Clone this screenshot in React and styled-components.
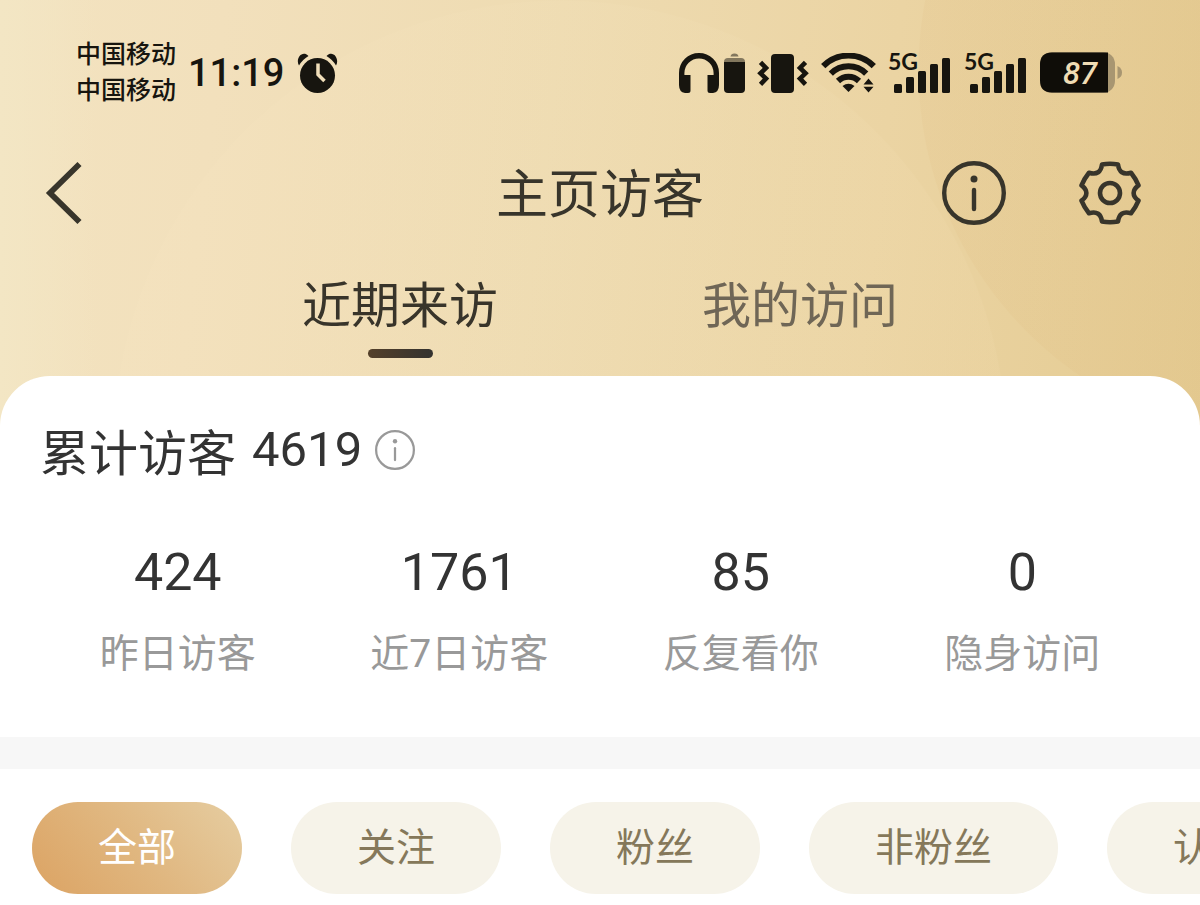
import React, { useState } from 'react';
import styled, { createGlobalStyle } from 'styled-components';

const GlobalStyle = createGlobalStyle`
  * {
    box-sizing: border-box;
  }
  body {
    margin: 0;
    background-color: #ffffff;
    color: #333333;
    font-family: Roboto, 'Noto Sans CJK SC', sans-serif;
  }
  button {
    background-color: transparent;
    border: none;
    color: inherit;
    cursor: pointer;
    font-family: inherit;
    margin: 0;
    padding: 0;
  }
  svg {
    display: block;
    flex: none;
  }
`;

const Page = styled.div`
  background: radial-gradient(circle 371px at 1289px 70px, rgba(218, 176, 112, 0.1) 99.7%, transparent 100%),
    linear-gradient(90deg, #f3e6c4 0%, rgba(243, 230, 196, 0) 8%),
    radial-gradient(circle 447px at 560px 447px, rgba(255, 236, 200, 0.08) 99.7%, transparent 100%),
    linear-gradient(97deg, #f3e3c0 0%, #f2e0bc 18%, #eedbb1 45%, #ebd4a3 72%, #e4cb92 100%);
  background-size: 100% 440px;
  background-repeat: no-repeat;
`;

const StatusBar = styled.div`
  align-items: center;
  color: #17150f;
  display: flex;
  height: 146px;
  justify-content: space-between;
  padding: 0 78px 0 76px;
`;

const StatusGroup = styled.div`
  align-items: center;
  display: flex;
  gap: 12px;
`;

const Carriers = styled.div`
  font-size: 25px;
  font-weight: 500;
  line-height: 36px;
`;

const Clock = styled.time`
  font-size: 38px;
  font-weight: 500;
  line-height: 64px;
`;

const NavBar = styled.header`
  align-items: center;
  color: #38352b;
  display: grid;
  grid-template-columns: 1fr auto 1fr;
  height: 94px;
  padding: 0 44px;
`;

const Title = styled.h1`
  font-size: 52px;
  font-weight: 400;
  line-height: 64px;
  margin: 0;
  padding-top: 6px;
`;

const NavActions = styled.div`
  display: flex;
  gap: 58px;
  justify-content: flex-end;
`;

const IconButton = styled.button`
  display: flex;
  justify-content: ${({ $align }) => $align || 'center'};
  width: ${({ $width }) => $width || 64}px;
`;

const Tabs = styled.nav`
  display: flex;
  padding: 35px 200px 18px;
`;

const Tab = styled.button`
  align-items: center;
  color: ${({ $active }) => ($active ? '#38342a' : '#6f6656')};
  display: flex;
  flex: 1;
  flex-direction: column;
  font-size: 49px;
  gap: 10px;
  line-height: 64px;
  white-space: nowrap;
  &::after {
    background: ${({ $active }) =>
      $active ? 'linear-gradient(90deg, #54402a, #33322f)' : 'transparent'};
    border-radius: 5px;
    content: '';
    height: 9px;
    width: 65px;
  }
`;

const Summary = styled.section`
  background-color: #ffffff;
  border-radius: 50px 50px 0 0;
  padding: 42px 37px 59px;
`;

const Total = styled.div`
  align-items: center;
  display: flex;
  gap: 13px;
  padding-left: 3px;
`;

const TotalText = styled.h2`
  display: flex;
  font-size: 49px;
  font-weight: 400;
  gap: 16px;
  line-height: 64px;
  margin: 0;
`;

const TotalLabel = styled.span`
  font-family: 'Noto Sans CJK SC', sans-serif;
`;

const Stats = styled.dl`
  display: grid;
  grid-template-columns: repeat(4, 1fr);
  margin: 59px 0 0;
`;

const Stat = styled.div`
  display: flex;
  flex-direction: column-reverse;
  gap: 25px;
  text-align: center;
`;

const StatValue = styled.dd`
  font-size: 52px;
  line-height: 64px;
  margin: 0;
`;

const StatLabel = styled.dt`
  color: #999999;
  font-size: 39px;
  line-height: 48px;
`;

const Filters = styled.div`
  background-color: #ffffff;
  border-top: 32px solid #f7f7f7;
  display: flex;
  gap: 49px;
  overflow-x: auto;
  padding: 33px 32px 11px;
  scrollbar-width: none;
`;

const Pill = styled.button`
  background: ${({ $active }) =>
    $active ? 'linear-gradient(50deg, #dca566 5%, #e0b780 50%, #e5cb9e 95%)' : '#f6f3e9'};
  border-radius: 46px;
  color: ${({ $active }) => ($active ? '#ffffff' : '#85785a')};
  flex: none;
  font-size: 39px;
  line-height: 92px;
  padding: 0 66px;
`;

const AlarmIcon = () => (
  <svg width="42" height="42" viewBox="0 0 42 42" aria-hidden="true">
    <circle cx="21.5" cy="23.5" r="17.5" fill="currentColor" />
    <path d="M3 13.500C-1 7 6 -2.500 12.500 4Q6.500 7.500 3 13.500Z" fill="currentColor" />
    <path d="M40 13.500C44 7 37 -2.500 30.500 4Q36.500 7.500 40 13.500Z" fill="currentColor" />
    <path d="M22 11.500V22.500L28.500 29" fill="none" stroke="#f1dfba" strokeWidth="3.500" />
  </svg>
);

const HeadsetIcon = () => (
  <svg width="66" height="40" viewBox="0 0 66 40" fill="currentColor" aria-hidden="true">
    <path d="M2.700 30V20A17.300 17.300 0 0 1 37.300 20V30" fill="none" stroke="currentColor" strokeWidth="5.400" />
    <path d="M0 22H11.500V37.500Q11.500 40 9 40H6Q0 39 0 32Z" />
    <path d="M40 22H28.500V37.500Q28.500 40 31 40H34Q40 39 40 32Z" />
    <path d="M51.500 3.500Q52 0.500 55.500 0.500T59.500 3.500Z" opacity="0.5" />
    <path d="M45 9Q45 5 49 5H62Q66 5 66 9Z" opacity="0.5" />
    <path d="M45 9H66V36Q66 40 62 40H49Q45 40 45 36Z" />
  </svg>
);

const VibrateIcon = () => (
  <svg width="52" height="40" viewBox="0 0 52 40" aria-hidden="true">
    <rect x="14" y="1" width="23" height="39" rx="4" fill="currentColor" />
    <path
      d="M3.500 9.300L9 15L3.500 20.300L9 25.600L3.500 31.300M48.500 9.300L43 15L48.500 20.300L43 25.600L48.500 31.300"
      fill="none"
      stroke="currentColor"
      strokeWidth="4.600"
    />
  </svg>
);

const WifiIcon = () => (
  <svg width="55" height="40" viewBox="0 0 55 40" aria-hidden="true">
    <g fill="none" stroke="currentColor" strokeWidth="6">
      <path d="M2.200 13.200A35.500 35.500 0 0 1 52.800 13.200" />
      <path d="M9.800 20.600A25 25 0 0 1 45.200 20.600" />
      <path d="M17 28A15 15 0 0 1 38 28" />
    </g>
    <path d="M21.500 33Q27.500 28.500 33.500 33L27.500 39Z" fill="currentColor" />
    <path d="M42.500 31.500H52.500L47.500 25.500ZM42.500 33.800H52.500L47.500 39.500Z" fill="currentColor" />
  </svg>
);

const SignalIcon = () => (
  <svg width="64" height="56" viewBox="0 -8 64 56" fill="currentColor" aria-label="5G">
    <text x="0" y="17" fontFamily="Lato, sans-serif" fontSize="23" fontWeight="700">
      5G
    </text>
    <rect x="6" y="31" width="8" height="9" rx="1.500" />
    <rect x="18" y="24" width="8" height="16" rx="1.500" />
    <rect x="30" y="18" width="8" height="22" rx="1.500" />
    <rect x="42" y="11" width="8" height="29" rx="1.500" />
    <rect x="54" y="5" width="8" height="35" rx="1.500" />
  </svg>
);

const BatteryIcon = ({ level }) => (
  <svg width="82" height="42" viewBox="0 0 82 42" aria-label={`${level}%`}>
    <rect x="0" y="0" width="75" height="41" rx="12" fill="#a89671" />
    <path d="M12 0.500H68V40.500H12Q0 40.500 0 28.500V12.500Q0 .5 12 .5Z" fill="#0f0d08" />
    <path d="M77.500 14Q82 16 82 20.500T77.500 27Z" fill="#a89671" />
    <text
      x="40"
      y="32"
      fill="#efdcb4"
      fontFamily="Roboto, sans-serif"
      fontSize="31"
      fontStyle="italic"
      fontWeight="500"
      textAnchor="middle"
    >
      {level}
    </text>
  </svg>
);

const BackIcon = () => (
  <svg width="40" height="64" viewBox="0 0 40 64" aria-hidden="true">
    <path d="M35.500 3L6 32L35.500 61" fill="none" stroke="currentColor" strokeWidth="5.800" />
  </svg>
);

const InfoIcon = ({ size, stroke }) => (
  <svg width={size} height={size} viewBox="0 0 64 64" aria-hidden="true">
    <g fill="none" stroke="currentColor" strokeWidth={stroke}>
      <circle cx="32" cy="32" r={32 - stroke / 2} />
      <path d="M32 29V48" strokeLinecap="round" />
    </g>
    <circle cx="32" cy="18" r="3.500" fill="currentColor" />
  </svg>
);

const GearIcon = () => (
  <svg width="64" height="64" viewBox="-32 -32 64 64" aria-hidden="true">
    <g fill="none" stroke="currentColor" strokeWidth="4.600" strokeLinejoin="round">
      <path d="M28.500 -7.700Q26 -14 21 -20.300C13 -18 9 -21 8 -28.500Q0 -30 -8 -28.500C-9 -21 -13 -18 -21 -20.300Q-26 -14 -28.500 -7.700C-22 -3 -22 3 -28.500 7.700Q-26 14 -21 20.300C-13 18 -9 21 -8 28.500Q0 30 8 28.500C9 21 13 18 21 20.300Q26 14 28.500 7.700C22 3 22 -3 28.500 -7.700Z" />
      <circle cx="0" cy="0" r="10" />
    </g>
  </svg>
);

const HintButton = styled(IconButton)`
  color: #999999;
`;

const tabs = ['近期来访', '我的访问'];

const stats = [
  { label: '昨日访客', value: 424 },
  { label: '近7日访客', value: 1761 },
  { label: '反复看你', value: 85 },
  { label: '隐身访问', value: 0 },
];

const filters = ['全部', '关注', '粉丝', '非粉丝', '认证'];

const App = () => {
  const [tab, setTab] = useState(tabs[0]);
  const [filter, setFilter] = useState(filters[0]);

  return (
    <Page>
      <GlobalStyle />
      <StatusBar>
        <StatusGroup>
          <Carriers>
            <div>中国移动</div>
            <div>中国移动</div>
          </Carriers>
          <Clock>11:19</Clock>
          <AlarmIcon />
        </StatusGroup>
        <StatusGroup>
          <HeadsetIcon />
          <VibrateIcon />
          <WifiIcon />
          <SignalIcon />
          <SignalIcon />
          <BatteryIcon level={87} />
        </StatusGroup>
      </StatusBar>
      <NavBar>
        <IconButton $align="flex-start" aria-label="返回">
          <BackIcon />
        </IconButton>
        <Title>主页访客</Title>
        <NavActions>
          <IconButton aria-label="说明">
            <InfoIcon size={64} stroke={4.4} />
          </IconButton>
          <IconButton $width={92} aria-label="设置">
            <GearIcon />
          </IconButton>
        </NavActions>
      </NavBar>
      <Tabs>
        {tabs.map((name) => (
          <Tab key={name} $active={name === tab} onClick={() => setTab(name)}>
            {name}
          </Tab>
        ))}
      </Tabs>
      <Summary>
        <Total>
          <TotalText>
            <TotalLabel>累计访客</TotalLabel>
            <span>4619</span>
          </TotalText>
          <HintButton $width={40} aria-label="累计访客说明">
            <InfoIcon size={40} stroke={3.6} />
          </HintButton>
        </Total>
        <Stats>
          {stats.map(({ label, value }) => (
            <Stat key={label}>
              <StatLabel>{label}</StatLabel>
              <StatValue>{value}</StatValue>
            </Stat>
          ))}
        </Stats>
      </Summary>
      <Filters>
        {filters.map((name) => (
          <Pill key={name} $active={name === filter} onClick={() => setFilter(name)}>
            {name}
          </Pill>
        ))}
      </Filters>
    </Page>
  );
};

export default App;
